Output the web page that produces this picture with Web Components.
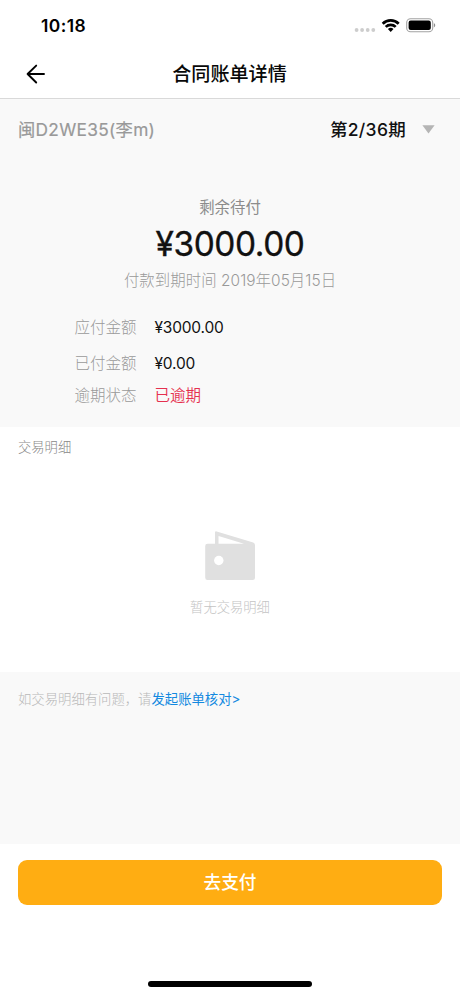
<!DOCTYPE html>
<html lang="zh-CN">
<head>
<meta charset="utf-8">
<title>合同账单详情</title>
<style>
body { margin: 0; background: #fff; font-family: Inter, "Noto Sans CJK SC", sans-serif; color: #111; }
</style>
</head>
<body>
<bill-app></bill-app>
<script>
const define = (name, html) => {
  const template = document.createElement('template');
  template.innerHTML = html;
  customElements.define(name, class extends HTMLElement {
    constructor() {
      super();
      this.attachShadow({ mode: 'open' }).append(template.content.cloneNode(true));
    }
  });
};

define('status-bar', `
<style>
:host { display: flex; height: 50px; box-sizing: border-box; padding: 0 24px 0 41px; align-items: center; justify-content: space-between; color: #000; }
.time { font-size: 17.4px; font-weight: 600; line-height: 20px; padding-top: 2px; letter-spacing: .45px; }
svg { display: block; }
</style>
<span class="time">10:18</span>
<svg width="84" height="20" viewBox="352 15 84 20">
  <g fill="#cdcdcd"><circle cx="356.6" cy="30" r="1.9"/><circle cx="362.1" cy="30" r="1.9"/><circle cx="367.7" cy="30" r="1.9"/><circle cx="373.3" cy="30" r="1.9"/></g>
  <g fill="none" stroke="#000" stroke-width="2.7"><path d="M382.7 23.7a11.4 11.4 0 0 1 16 0"/><path d="M385.7 26.9a7.1 7.1 0 0 1 10 0"/></g>
  <path d="M387.9 29.1a4 4 0 0 1 5.6 0L390.7 32z"/>
  <rect x="406.7" y="18.7" width="26" height="13" rx="3.8" fill="#fff" stroke="#a3a3a3" stroke-width="1.1"/>
  <rect x="408.6" y="20.6" width="22.2" height="9.4" rx="2.1"/>
  <path d="M433.9 23v4.4c1.8-.7 1.8-3.7 0-4.4z" fill="#8f8f8f"/>
</svg>`);

define('nav-bar', `
<style>
:host { display: grid; grid-template-columns: 46px 1fr 46px; height: 49px; box-sizing: border-box; border-bottom: 1px solid #d9d9d9; align-items: center; color: #080808; }
svg { display: block; margin-left: 26px; }
h1 { margin: 0; font-size: 19.1px; line-height: 28px; font-weight: 500; text-align: center; padding-right: 1px; }
</style>
<svg width="20" height="20" viewBox="26 64 20 20" fill="none" stroke="#000" stroke-width="1.9" stroke-linecap="round" stroke-linejoin="round"><path d="M44 74H27.6M36.2 65.6 27.6 74l8.6 8.5"/></svg>
<h1><slot></slot></h1>`);

define('contract-header', `
<style>
:host { display: flex; padding: 18px 25px 0 18px; height: 44px; box-sizing: border-box; line-height: 26px; }
.name { flex: 1; font-size: 17.3px; letter-spacing: .3px; font-weight: 400; color: #999; -webkit-text-stroke: .2px #999; }
.term { font-size: 17.5px; letter-spacing: .3px; font-weight: 500; color: #111; }
svg { margin: 8px 0 0 16px; }
</style>
<span class="name"><slot name="contract"></slot></span>
<span class="term"><slot name="term"></slot></span>
<svg width="13" height="9" viewBox="0 0 13 9"><path d="M.4.3h12.2L6.5 8.4z" fill="#b5b5b5"/></svg>`);

define('amount-summary', `
<style>
:host { display: flex; flex-direction: column; align-items: center; padding-top: 54px; }
.label { font-size: 15.4px; line-height: 22px; color: #8c8c8c; }
.amount { font-size: 33.4px; line-height: 40px; margin-top: 5px; font-weight: 400; color: #111; letter-spacing: -.4px; -webkit-text-stroke: .35px #111; }
.due { font-size: 15.4px; line-height: 22px; margin-top: 6px; color: #999; font-weight: 300; letter-spacing: .07px; }
</style>
<span class="label"><slot name="label"></slot></span>
<span class="amount"><slot name="amount"></slot></span>
<span class="due"><slot name="due"></slot></span>`);

define('detail-row', `
<style>
:host { display: flex; gap: 18px; font-size: 15.5px; line-height: 22px; color: #111; }
.key { color: #999; width: 62px; white-space: nowrap; font-weight: 300; }
.value { letter-spacing: -.2px; }
</style>
<span class="key"><slot name="key"></slot></span><span class="value"><slot></slot></span>`);

define('empty-state', `
<style>
:host { display: flex; flex-direction: column; align-items: center; color: #c4c4c4; font-size: 13.3px; line-height: 20px; font-weight: 300; }
svg { display: block; margin-bottom: 15px; }
</style>
<svg width="52" height="52" viewBox="204 530 52 52">
  <path fill="#e0e0e0" fill-rule="evenodd" d="M215 543.8v-11.2q0-1.7 1.7-1.2l36.5 11.1q1.8.6 1.8 2.5V577.5q0 2.5-2.5 2.5H207.5q-2.3 0-2.3-2.5V546.2q0-2.4 2.3-2.4zM218.5 543.8H244l-25.5-7.7z"/>
  <circle cx="218.8" cy="560.5" r="4.7" fill="#fff"/>
</svg>
<slot></slot>`);

define('pay-button', `
<style>
:host { display: block; }
button { display: block; width: 100%; height: 44.5px; border: 0; padding: 2px 0 0; border-radius: 9px; background: #ffad12; color: #fff; font: 500 17.7px/42px Inter, "Noto Sans CJK SC", sans-serif; }
</style>
<button><slot></slot></button>`);

define('bill-app', `
<style>
:host { display: flex; flex-direction: column; width: 460px; height: 996px; overflow: hidden; background: #fff; }
.summary { height: 328px; background: #f9f9f9; }
.rows { padding: 25px 0 0 74.5px; }
.rows detail-row:nth-child(2) { margin-top: 14px; }
.rows detail-row:nth-child(3) { margin-top: 10px; }
.overdue { color: #e5304f; letter-spacing: 0; font-weight: 350; }
.transactions { height: 245px; }
h2 { margin: 0; padding: 10px 18px 0; font-size: 13.3px; line-height: 20px; font-weight: 300; color: #888; }
empty-state { padding-top: 73px; }
.help { height: 172px; box-sizing: border-box; background: #f9f9f9; padding: 17px 18px; font-size: 13.35px; line-height: 20px; color: #b8b8b8; font-weight: 300; }
a { color: #1389e0; font-weight: 400; }
footer { flex: 1; display: flex; flex-direction: column; justify-content: space-between; padding: 16px 18px 9px; }
.home { width: 164px; height: 6px; border-radius: 3px; background: #000; align-self: center; }
</style>
<status-bar></status-bar>
<nav-bar>合同账单详情</nav-bar>
<section class="summary">
  <contract-header><span slot="contract">闽D2WE35(李m)</span><span slot="term">第2/36期</span></contract-header>
  <amount-summary><span slot="label">剩余待付</span><span slot="amount">¥3000.00</span><span slot="due">付款到期时间 2019年05月15日</span></amount-summary>
  <div class="rows">
    <detail-row><span slot="key">应付金额</span>¥3000.00</detail-row>
    <detail-row><span slot="key">已付金额</span>¥0.00</detail-row>
    <detail-row><span slot="key">逾期状态</span><span class="overdue">已逾期</span></detail-row>
  </div>
</section>
<section class="transactions"><h2>交易明细</h2><empty-state>暂无交易明细</empty-state></section>
<section class="help">如交易明细有问题，请<a>发起账单核对&gt;</a></section>
<footer><pay-button>去支付</pay-button><div class="home"></div></footer>`);
</script>
</body>
</html>
